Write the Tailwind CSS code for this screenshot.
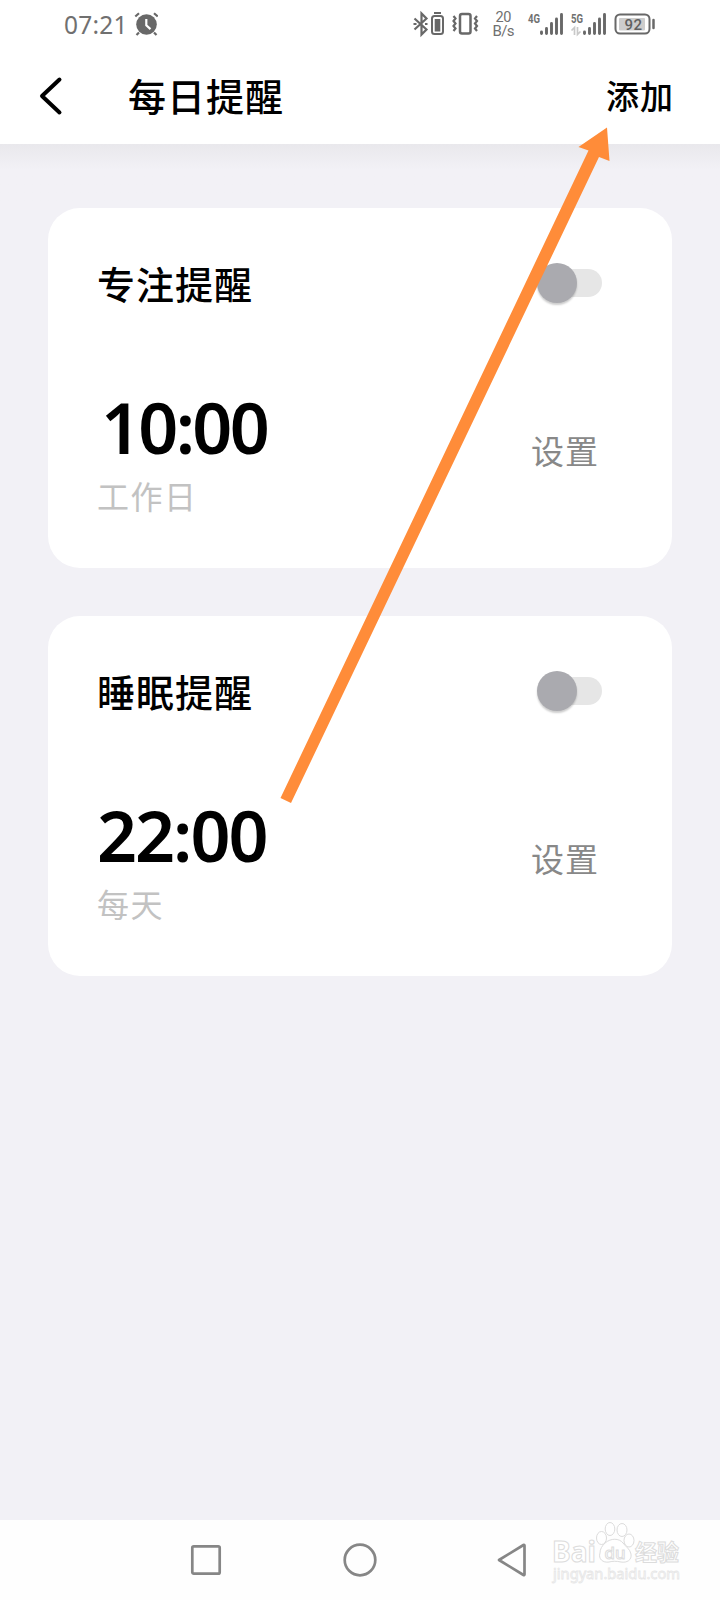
<!DOCTYPE html>
<html lang="zh-CN">
<head>
<meta charset="utf-8">
<title>每日提醒</title>
<script src="https://cdn.jsdelivr.net/npm/@tailwindcss/browser@4"></script>
</head>
<body class="bg-[#f2f1f6] font-['Noto_Sans','Noto_Sans_CJK_SC',sans-serif] text-black">
<div class="relative flex h-[1600px] w-[720px] flex-col overflow-hidden">
  <header class="h-36 shrink-0 bg-white">
    <div class="flex h-12 items-center justify-between pl-16 pr-[50px] text-[#707070]">
      <div class="flex items-center gap-2">
        <span class="w-[62px] pt-0.5 text-[24.5px] leading-12 tracking-[0.2px]">07:21</span>
        <svg class="h-6 w-6" viewBox="0 0 24 24" fill="none" stroke="#686868">
          <circle cx="12.5" cy="12.5" r="10.3" fill="#686868" stroke="none"/>
          <path d="M1.3 4.5 5 1.2M20 1.2l3.7 3.3" stroke-width="2.2"/>
          <path d="M5 20.5 2.5 23M20 20.5l2.5 2.5" stroke-width="2.2"/>
          <path d="M12.3 7v6.3l4.2 3.8" stroke="#fff" stroke-width="2.2"/>
        </svg>
      </div>
      <svg class="h-12 w-[270px]" viewBox="0 0 270 48" fill="none" stroke="#686868" font-family="Roboto">
        <path d="M14.500 18.500 26.500 29.500 21.500 34.500V13.500l5 5L14.500 29.500" stroke-width="2.200"/>
        <path d="M13.500 24h3M25 24h2.500" stroke-width="2"/>
        <path d="M34 13h7" stroke-width="2"/>
        <rect x="32" y="16" width="11" height="18" rx="2.500" stroke-width="2"/>
        <rect x="34.700" y="19" width="5.600" height="12.500" fill="#686868" stroke="none"/>
        <rect x="60" y="14" width="10.500" height="19.500" rx="2" stroke-width="2.500"/>
        <path d="m53.500 16 2 2.500-2 2.500 2 2.500-2 2.500 2 2.500-2 2.500M77 16l-2 2.500 2 2.500-2 2.500 2 2.500-2 2.500 2 2.500" stroke-width="2.200"/>
        <g fill="#707070" stroke="none">
          <text x="95.500" y="22" font-size="14.500" textLength="16">20</text>
          <text x="92.500" y="36" font-size="15" textLength="22">B/s</text>
          <text x="128" y="22.500" font-size="13" font-weight="700" textLength="12" lengthAdjust="spacingAndGlyphs">4G</text>
          <text x="171" y="22.500" font-size="13" font-weight="700" textLength="12" lengthAdjust="spacingAndGlyphs">5G</text>
        </g>
        <g stroke-width="2.900" stroke-linecap="round">
          <path d="M141.500 32v1.500M146.500 28.500v5M151.500 23.500v10M156.500 19v14.500M161.500 14.500v19"/>
          <path d="M184.500 32v1.500M189.500 28.500v5M194.500 23.500v10M199.500 19v14.500M204.500 14.500v19"/>
        </g>
        <path d="m171.500 30.500 3-3V35M177.500 27v7.500l3-3" stroke="#c8c8c8" stroke-width="1.700"/>
        <rect x="215.500" y="14.500" width="34" height="19" rx="4.500" stroke-width="2"/>
        <rect x="219" y="18" width="26" height="12.500" rx="1" fill="#cdcdcd" stroke="none"/>
        <path d="M253.500 20v8" stroke-width="2.500" stroke-linecap="round"/>
        <text x="224.500" y="29.500" font-size="15" font-weight="500" fill="#606060" stroke="none" textLength="17.500">92</text>
      </svg>
    </div>
    <div class="flex h-24 items-center pl-[38px] pr-[46px]">
      <svg class="h-10 w-7" viewBox="0 0 28 40" fill="none" stroke="#000" stroke-width="4" stroke-linecap="round" stroke-linejoin="round"><path d="M21.500 3.500 4 20l17.500 16.500"/></svg>
      <h1 class="ml-[62px] text-[38px] font-medium leading-none tracking-[1px]">每日提醒</h1>
      <button class="ml-auto text-[33px] font-medium leading-none tracking-[1px]">添加</button>
    </div>
  </header>
  <div class="h-16 shrink-0 bg-linear-to-b from-[#e9e8ec] to-[#f2f1f6] to-40%"></div>
  <main class="flex grow flex-col gap-12 px-12">
    <section class="h-[360px] rounded-[32px] bg-white pl-[49px] pr-[70px] pt-[52px]">
      <div class="flex h-12 items-center justify-between">
        <h2 class="text-[38px] font-medium leading-none tracking-[1px]">专注提醒</h2>
        <div class="-mt-0.5 flex h-7 w-[64px] items-center rounded-full bg-[#e6e6e6]"><span class="-ml-px h-10 w-10 rounded-full bg-[#aaaaaf] shadow-[0_2px_2px_rgba(0,0,0,0.2)]"></span></div>
      </div>
      <div class="mt-[89px] flex items-center justify-between">
        <div>
          <p class="h-[60px] pl-1 text-[70px] font-semibold leading-[60px] tracking-[-2.700px]">10:00</p>
          <p class="mt-5 h-10 text-[32px] leading-10 tracking-[1.500px] text-[#c2c2c2]">工作日</p>
        </div>
        <span class="mr-[3px] pb-2.5 text-[33px] leading-10 tracking-[1px] text-[#888]">设置</span>
      </div>
    </section>
    <section class="h-[360px] rounded-[32px] bg-white pl-[49px] pr-[70px] pt-[52px]">
      <div class="flex h-12 items-center justify-between">
        <h2 class="text-[38px] font-medium leading-none tracking-[1px]">睡眠提醒</h2>
        <div class="-mt-0.5 flex h-7 w-[64px] items-center rounded-full bg-[#e6e6e6]"><span class="-ml-px h-10 w-10 rounded-full bg-[#aaaaaf] shadow-[0_2px_2px_rgba(0,0,0,0.2)]"></span></div>
      </div>
      <div class="mt-[89px] flex items-center justify-between">
        <div>
          <p class="h-[60px] text-[70px] font-semibold leading-[60px] tracking-[-2px]">22:00</p>
          <p class="mt-5 h-10 text-[32px] leading-10 tracking-[1.500px] text-[#c2c2c2]">每天</p>
        </div>
        <span class="mr-[3px] pb-2.5 text-[33px] leading-10 tracking-[1px] text-[#888]">设置</span>
      </div>
    </section>
  </main>
  <nav class="flex h-20 shrink-0 items-center bg-[#fefefe] pl-[190px]">
    <svg class="h-20 w-[340px]" viewBox="0 0 340 80" fill="none" stroke="#868686" stroke-width="2.700" stroke-linejoin="round">
      <rect x="2.300" y="26.300" width="27.400" height="27.400" rx="1.500"/>
      <circle cx="170" cy="40" r="15.300"/>
      <path d="M309 40 333.500 25a.7.700 0 0 1 1 .6v28.800a.7.700 0 0 1-1 .6Z"/>
    </svg>
    <svg class="h-20 w-[190px]" viewBox="0 0 190 80" fill="#fff" stroke="#dcdcdc" stroke-width="1" font-family="Noto Sans, Noto Sans CJK SC, sans-serif">
      <text x="22" y="42" font-size="29" font-weight="700" textLength="44" lengthAdjust="spacingAndGlyphs">Bai</text>
      <text x="105" y="40" font-size="22" font-weight="700" textLength="44">经验</text>
      <ellipse cx="71.500" cy="18" rx="5" ry="6.500"/>
      <ellipse cx="80" cy="9" rx="4.800" ry="6.500"/>
      <ellipse cx="92" cy="10" rx="5" ry="6.500"/>
      <ellipse cx="99" cy="20.500" rx="5" ry="6.500"/>
      <path d="M75 23c6-5 14-5 18 0 3 4 7 6 8 11 1 6-4 9-10 8-5-1-8-1-12 0-6 1-11-3-9-9 0-4 2-7 5-10Z"/>
      <text x="74.500" y="39" font-size="17" font-weight="500" textLength="21" lengthAdjust="spacingAndGlyphs">du</text>
      <text x="23" y="59" font-size="14.500" stroke="#e6e6e6" stroke-width=".8" textLength="127" lengthAdjust="spacingAndGlyphs">jingyan.baidu.com</text>
    </svg>
  </nav>
  <svg class="pointer-events-none absolute left-0 top-0 h-[820px] w-[720px]" viewBox="0 0 720 820"><path d="M280.500 798 588.500 150.500 578.500 147 607 127.500 609.500 161 599 157 291 803Z" fill="#ff8c39"/></svg>
</div>
</body>
</html>
